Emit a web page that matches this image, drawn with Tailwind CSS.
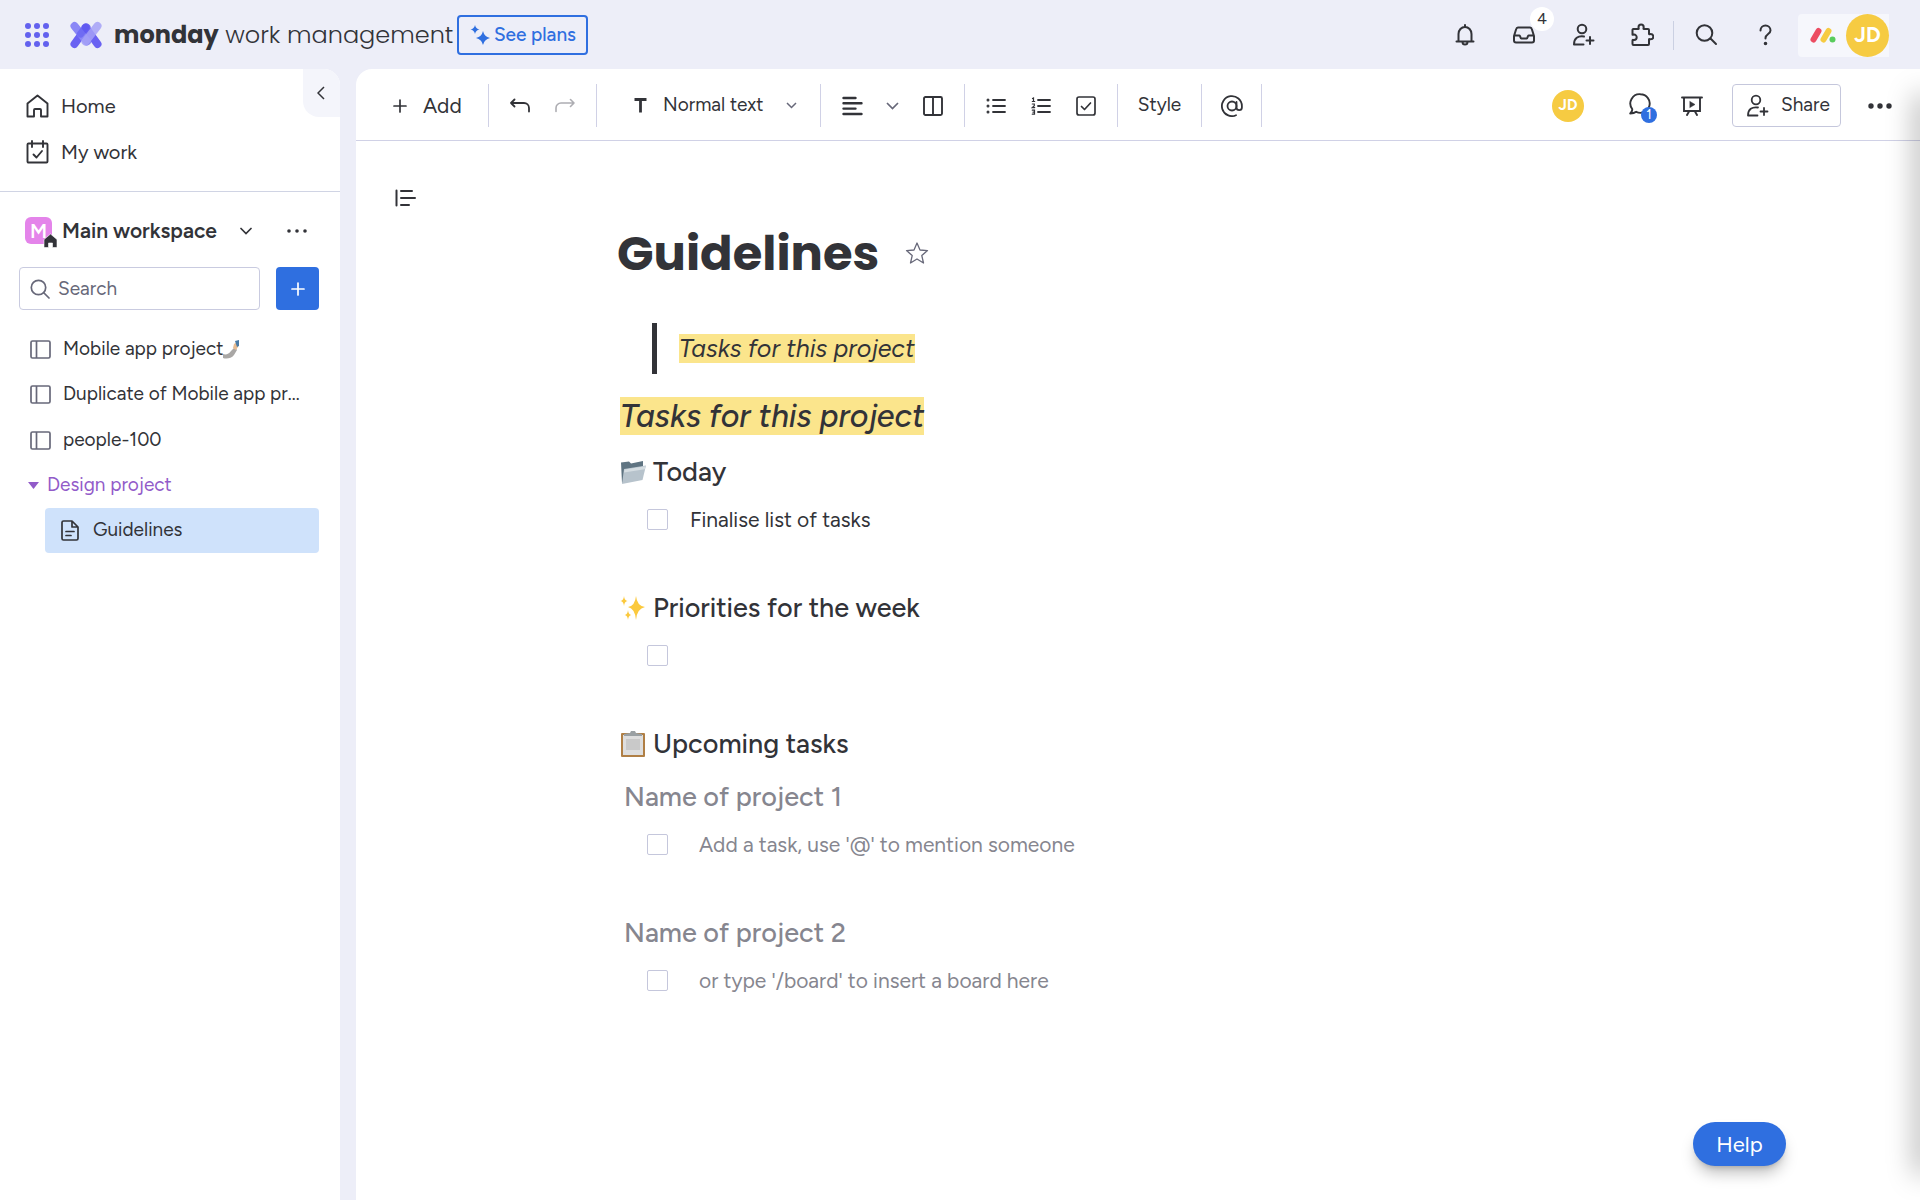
<!DOCTYPE html>
<html lang="en">
    <head>
        <meta charset="UTF-8" />
        <meta name="viewport" content="width=device-width, initial-scale=1" />
        <title>Guidelines</title>
        <script src="https://cdn.jsdelivr.net/npm/@tailwindcss/browser@4"></script>
    </head>
    <body class="flex min-h-screen flex-col bg-[#edeef8] font-['Figtree','Inter',sans-serif] text-[#323338]">
        <!-- top bar -->
        <header class="flex h-[69px] shrink-0 items-center pt-px pr-[31px] pl-6">
            <button aria-label="Apps">
                <svg class="h-[26px] w-[26px]" viewBox="0 0 26 26" fill="#6361ee">
                    <circle cx="4" cy="4" r="3" /><circle cx="13" cy="4" r="3" /><circle cx="22" cy="4" r="3" />
                    <circle cx="4" cy="13" r="3" /><circle cx="13" cy="13" r="3" /><circle cx="22" cy="13" r="3" />
                    <circle cx="4" cy="22" r="3" /><circle cx="13" cy="22" r="3" /><circle cx="22" cy="22" r="3" />
                </svg>
            </button>
            <svg class="ml-5 h-7 w-8" viewBox="0 0 32 28" fill="none" stroke-linecap="round" stroke-width="8">
                <path d="M15.500 6.500L27.500 23M16.500 6.500L4.500 23" stroke="#6a62f2" />
                <path d="M4.500 5L17 20.500" stroke="#8a87f6" />
                <path d="M27.500 5L15.500 20.500" stroke="#a5a1f7" stroke-opacity=".85" />
                <path d="M15.500 6.500L10.500 13" stroke="#5a53f0" stroke-opacity=".55" stroke-width="7" />
            </svg>
            <a href="#" class="ml-3 font-['Poppins','Figtree',sans-serif] text-[24px] leading-8 font-light whitespace-nowrap"><b class="font-bold">monday</b> work management</a>
            <button class="ml-1 flex h-10 w-[131px] shrink-0 items-center justify-center gap-1 rounded border-2 border-[#2f6fe0] text-[19px] font-medium whitespace-nowrap text-[#2f6fe0]">
                <svg class="h-5 w-5" viewBox="0 0 20 20" fill="currentColor">
                    <path d="M5 0q.8 3.700 4.500 4.500Q5.800 5.300 5 9 4.200 5.300.5 4.500 4.200 3.700 5 0zM13 6q1.200 5.600 7 7-5.800 1.400-7 7-1.200-5.600-7-7 5.800-1.400 7-7z" />
                </svg>
                See plans
            </button>
            <nav class="ml-auto flex items-center">
                <button aria-label="Notifications" class="flex w-[59px] justify-center">
                    <svg class="h-6 w-6" viewBox="0 0 24 24" fill="none" stroke="currentColor" stroke-width="2" stroke-linecap="round" stroke-linejoin="round">
                        <path d="M12 2v1.500M3.500 18.500h17M5.500 18.500V11a6.500 7 0 0 1 13 0v7.500M9.500 19a2.500 2.500 0 0 0 5 0" />
                    </svg>
                </button>
                <button aria-label="Inbox" class="relative flex w-[59px] justify-center">
                    <svg class="h-6 w-6" viewBox="0 0 24 24" fill="none" stroke="currentColor" stroke-width="2" stroke-linejoin="round">
                        <path d="M6 4.500h12a2 2 0 0 1 1.800 1.500L22 13v4.500a2 2 0 0 1-2 2H4a2 2 0 0 1-2-2V13l2.200-7A2 2 0 0 1 6 4.500zM2 12.500h5.500c.8 0 .8 3 1.800 3h5.400c1 0 1-3 1.800-3H22" />
                    </svg>
                    <span class="absolute -top-4 left-9 flex h-6 w-6 items-center justify-center rounded-full bg-white text-[16px]">4</span>
                </button>
                <button aria-label="Invite members" class="flex w-[59px] justify-center">
                    <svg class="h-6 w-6" viewBox="0 0 24 24" fill="none" stroke="currentColor" stroke-width="2" stroke-linecap="round" stroke-linejoin="round">
                        <circle cx="11" cy="6" r="4.300" /><path d="M13 13.500c-6-.8-10 1.500-10 8h9.500M19 14v7M15.500 17.500h7" />
                    </svg>
                </button>
                <button aria-label="Apps marketplace" class="flex w-[59px] justify-center">
                    <svg class="h-6 w-6" viewBox="0 0 24 24" fill="none" stroke="currentColor" stroke-width="2" stroke-linejoin="round">
                        <path d="M3 6h5.300c.8 0 .2-.9.200-1.800a2.600 2.600 0 0 1 5.200 0c0 .9-.6 1.800.2 1.800H18a1 1 0 0 1 1 1v3.800c0 .8.8.3 1.700.3a2.600 2.600 0 0 1 0 5.200c-.9 0-1.700-.6-1.700.2V21a1 1 0 0 1-1 1H3.500a1 1 0 0 1-1-1v-3.600c0-.9.700-.4 1.500-.4a2.700 2.700 0 0 0 0-5.400c-.8 0-1.500.6-1.500-.2V7a1 1 0 0 1 .5-1z" />
                    </svg>
                </button>
                <span class="mx-0.5 h-[29px] w-px bg-[#cbd0e2]"></span>
                <button aria-label="Search" class="flex w-[59px] justify-center">
                    <svg class="h-6 w-6" viewBox="0 0 24 24" fill="none" stroke="currentColor" stroke-width="2" stroke-linecap="round">
                        <circle cx="10.500" cy="10" r="7.800" /><path d="M16.500 15.500l5.500 5.500" />
                    </svg>
                </button>
                <button aria-label="Help center" class="flex w-[59px] justify-center">
                    <svg class="h-6 w-6" viewBox="0 0 24 24" fill="none" stroke="currentColor" stroke-width="2" stroke-linecap="round">
                        <path d="M7.500 7.500a5 5 0 0 1 10 0c0 3.500-5 3.500-5 7.500v.5" /><circle cx="12.500" cy="20.500" r=".8" fill="currentColor" />
                    </svg>
                </button>
                <button aria-label="Profile" class="ml-1 flex h-[43px] items-center rounded-l bg-[#f6f7fc] pl-3">
                    <svg class="h-4 w-[26px]" viewBox="0 0 26 16" fill="none" stroke-linecap="round" stroke-width="6">
                        <path d="M3.500 12.500L8.500 4" stroke="#ec4d62" /><path d="M13.500 12.500L18.500 4" stroke="#f6cb42" />
                        <circle cx="22.500" cy="12.500" r="3" fill="#59cc5c" />
                    </svg>
                    <span class="ml-2.5 flex h-[43px] w-[43px] items-center justify-center rounded-full bg-[#f6cb42] text-[21px] font-bold text-white">JD</span>
                </button>
            </nav>
        </header>

        <div class="flex flex-1 gap-4">
            <!-- sidebar -->
            <aside class="w-[340px] shrink-0 rounded-tr-2xl bg-white">
                <div class="flex h-[123px] border-b border-[#d0d4e4]">
                    <nav class="flex flex-1 flex-col pt-3.5 pl-[26px] text-[20px]">
                        <a href="#" class="flex h-[46px] items-center gap-3">
                            <svg class="h-6 w-[23px]" viewBox="0 0 23 24" fill="none" stroke="currentColor" stroke-width="1.900" stroke-linejoin="round">
                                <path d="M1.500 9.500L11.500 1.500l10 8V22.500h-6.500v-6.500a1 1 0 0 0-1-1h-5a1 1 0 0 0-1 1v6.500H1.500z" />
                            </svg>
                            Home
                        </a>
                        <a href="#" class="flex h-[46px] items-center gap-3">
                            <svg class="h-6 w-[23px]" viewBox="0 0 23 24" fill="none" stroke="currentColor" stroke-width="1.900" stroke-linecap="round" stroke-linejoin="round">
                                <rect x="1.500" y="3.500" width="20" height="19" rx="1" /><path d="M6 1v6M17 1v6M7.500 14.500l3 3 5.500-6.500" />
                            </svg>
                            My work
                        </a>
                    </nav>
                    <button aria-label="Collapse sidebar" class="flex h-12 w-[37px] items-center justify-center rounded-tr-2xl rounded-bl-2xl bg-[#f4f5fb]">
                        <svg class="mr-0.5 h-3.5 w-2" viewBox="0 0 8 14" fill="none" stroke="currentColor" stroke-width="1.500"><path d="M7 1L1 7l6 6" /></svg>
                    </button>
                </div>

                <div class="flex h-[75px] items-center pt-0.5 pr-[31px] pl-[25px]">
                    <div class="relative flex h-[27px] w-[27px] items-center justify-center rounded-md bg-[#e484ea] text-[20px] font-semibold text-white">
                        M
                        <svg class="absolute -right-1.5 -bottom-1 h-[15px] w-[15px]" viewBox="0 0 15 15">
                            <path d="M1 6.500L7.500 1 14 6.500V14.500H9.500V10h-4v4.500H1z" fill="#323338" stroke="#fff" stroke-width=".6" />
                        </svg>
                    </div>
                    <h2 class="ml-2.5 w-[174px] text-[21px] font-semibold whitespace-nowrap">Main workspace</h2>
                    <button aria-label="Switch workspace" class="p-1">
                        <svg class="h-2 w-3" viewBox="0 0 12 8" fill="none" stroke="currentColor" stroke-width="1.700" stroke-linecap="round"><path d="M1 1.500l5 5 5-5" /></svg>
                    </button>
                    <button aria-label="Workspace options" class="ml-auto">
                        <svg class="mr-0.5 h-5 w-5" viewBox="0 0 20 20" fill="currentColor"><circle cx="2" cy="10" r="1.800" /><circle cx="10" cy="10" r="1.800" /><circle cx="18" cy="10" r="1.800" /></svg>
                    </button>
                </div>

                <div class="flex gap-4 pr-[21px] pl-[19px]">
                    <label class="flex h-[43px] flex-1 items-center gap-2 rounded border border-[#c9cbe0] pl-2.5 text-[#676879]">
                        <svg class="h-5 w-5 shrink-0" viewBox="0 0 20 20" fill="none" stroke="currentColor" stroke-width="1.700" stroke-linecap="round"><circle cx="8.500" cy="8.500" r="7.200" /><path d="M14 14l5 5" /></svg>
                        <input type="search" aria-label="Search" placeholder="Search" class="w-full min-w-0 bg-transparent pt-px text-[19px] outline-none placeholder:text-[#676879]" />
                    </label>
                    <button aria-label="Add item" class="flex h-[43px] w-[43px] items-center justify-center rounded bg-[#2f6fe0] text-white">
                        <svg class="h-3.5 w-3.5" viewBox="0 0 14 14" stroke="currentColor" stroke-width="1.700" stroke-linecap="round"><path d="M7 1v12M1 7h12" /></svg>
                    </button>
                </div>

                <ul class="mt-[17px] pr-[21px] pl-[30px] text-[19px]">
                    <li>
                        <a href="#" class="flex h-[45px] items-center gap-3">
                            <svg class="h-[19px] w-[21px] shrink-0" viewBox="0 0 21 19" fill="none" stroke="#676879" stroke-width="1.700"><rect x="1" y="1" width="19" height="17" rx="1.500" /><path d="M6.500 1v17" /></svg>
                            <span class="flex items-center whitespace-nowrap">Mobile app project
                                <svg class="h-[19px] w-[17px]" viewBox="0 0 17 19">
                                    <path d="M0 14c3 1 6 0 8-3l4-4 2 3-3 5c-3 4-8 4-11 3z" fill="#a9a7a5" />
                                    <path d="M10 8l1-4 3-2 1 5-2 3z" fill="#e9bd92" />
                                    <path d="M12 1l4-1v6l-2 1z" fill="#4a7ba6" />
                                </svg>
                            </span>
                        </a>
                    </li>
                    <li>
                        <a href="#" class="flex h-[45px] items-center gap-3">
                            <svg class="h-[19px] w-[21px] shrink-0" viewBox="0 0 21 19" fill="none" stroke="#676879" stroke-width="1.700"><rect x="1" y="1" width="19" height="17" rx="1.500" /><path d="M6.500 1v17" /></svg>
                            <span class="whitespace-nowrap">Duplicate of Mobile app pr...</span>
                        </a>
                    </li>
                    <li>
                        <a href="#" class="flex h-[46px] items-center gap-3">
                            <svg class="h-[19px] w-[21px] shrink-0" viewBox="0 0 21 19" fill="none" stroke="#676879" stroke-width="1.700"><rect x="1" y="1" width="19" height="17" rx="1.500" /><path d="M6.500 1v17" /></svg>
                            people-100
                        </a>
                    </li>
                    <li>
                        <button class="-ml-0.5 flex h-[45px] items-center gap-2 text-[#925bc9]">
                            <svg class="h-[7px] w-[11px]" viewBox="0 0 11 7" fill="currentColor"><path d="M0 0h11L5.500 7z" /></svg>
                            Design project
                        </button>
                        <a href="#" class="ml-[15px] flex h-[45px] items-center gap-3.5 rounded bg-[#cfe2fb] pl-4">
                            <svg class="h-[21px] w-[18px]" viewBox="0 0 18 21" fill="none" stroke="currentColor" stroke-width="1.700" stroke-linecap="round" stroke-linejoin="round">
                                <path d="M2.500 1H11l6 6v11.500A1.500 1.500 0 0 1 15.500 20h-13A1.500 1.500 0 0 1 1 18.500v-16A1.500 1.500 0 0 1 2.500 1zM11 1v6h6M5 11.500h8M5 15.500h5" />
                            </svg>
                            Guidelines
                        </a>
                    </li>
                </ul>
            </aside>

            <main class="relative min-w-0 flex-1 overflow-hidden rounded-tl-2xl bg-white">
                <!-- toolbar -->
                <div class="flex h-[72px] items-center border-b border-[#d0d1e6] pt-0.5 pr-6 text-[19px]">
                    <button class="flex h-[43px] w-[133px] items-center gap-4 border-r border-[#d0d1e6] pl-[37px] text-[21px]">
                        <svg class="h-3.5 w-3.5" viewBox="0 0 14 14" stroke="currentColor" stroke-width="1.700" stroke-linecap="round"><path d="M7 1v12M1 7h12" /></svg>
                        Add
                    </button>
                    <div class="flex h-[43px] w-[108px] items-center justify-center gap-[25px] border-r border-[#d0d1e6]">
                        <button aria-label="Undo">
                            <svg class="h-4 w-5" viewBox="0 0 20 16" fill="none" stroke="currentColor" stroke-width="1.800" stroke-linecap="round" stroke-linejoin="round"><path d="M4.500 1.500L1 5l3.500 3.500M1 5h13a5 5 0 0 1 5 5V13.500" /></svg>
                        </button>
                        <button aria-label="Redo" class="text-[#adadb2]">
                            <svg class="h-4 w-5" viewBox="0 0 20 16" fill="none" stroke="currentColor" stroke-width="1.600" stroke-linecap="round" stroke-linejoin="round"><path d="M15.500 1.500L19 5l-3.500 3.500M19 5H6a5 5 0 0 0-5 5V13.500" /></svg>
                        </button>
                    </div>
                    <label class="relative flex h-[43px] w-[224px] items-center border-r border-[#d0d1e6] pl-[37px]">
                        <svg class="h-[15px] w-[13px]" viewBox="0 0 13 15" fill="none" stroke="currentColor" stroke-width="2.800"><path d="M.500 1.500h12M6.500 1.500v13" /></svg>
                        <select aria-label="Text style" class="ml-4 w-[142px] appearance-none bg-transparent outline-none"><option>Normal text</option></select>
                        <svg class="pointer-events-none absolute right-[23px] h-[7px] w-[11px]" viewBox="0 0 11 7" fill="none" stroke="#676879" stroke-width="1.500"><path d="M1 1l4.500 4.500L10 1" /></svg>
                    </label>
                    <div class="flex h-[43px] w-36 items-center border-r border-[#d0d1e6] pl-[21px]">
                        <button aria-label="Align">
                            <svg class="h-5 w-[21px]" viewBox="0 0 21 20" stroke="currentColor" stroke-width="2.400" stroke-linecap="round"><path d="M1.500 2h12M1.500 7.300h18M1.500 12.600h12M1.500 18h18" /></svg>
                        </button>
                        <button aria-label="Align options" class="ml-[23px]">
                            <svg class="h-2 w-[13px]" viewBox="0 0 13 8" fill="none" stroke="#676879" stroke-width="1.700"><path d="M1 1l5.500 5.500L12 1" /></svg>
                        </button>
                        <button aria-label="Columns" class="ml-6">
                            <svg class="h-5 w-5" viewBox="0 0 20 20" fill="none" stroke="currentColor" stroke-width="1.900"><rect x="1" y="1" width="18" height="18" rx="1.500" /><path d="M10 1v18" /></svg>
                        </button>
                    </div>
                    <div class="flex h-[43px] w-[153px] items-center justify-center gap-[25px] border-r border-[#d0d1e6]">
                        <button aria-label="Bulleted list">
                            <svg class="h-5 w-5" viewBox="0 0 20 20" fill="currentColor" stroke="currentColor" stroke-width="1.800" stroke-linecap="round"><path d="M7 4h12M7 10h12M7 16h12" /><circle cx="2" cy="4" r=".6" /><circle cx="2" cy="10" r=".6" /><circle cx="2" cy="16" r=".6" /></svg>
                        </button>
                        <button aria-label="Numbered list">
                            <svg class="h-5 w-5" viewBox="0 0 20 20" fill="none" stroke="currentColor" stroke-width="1.800" stroke-linecap="round"><path d="M7 4h12M7 10h12M7 16h12" /><path stroke-width="1.200" d="M1.500 2.500L2.500 2v3.500M1.300 5.500h2.400M1.300 8h2v1.800l-2 1.800h2.400M1.300 14.200h2.200v4H1.300M2 16.200h1.500" /></svg>
                        </button>
                        <button aria-label="Checklist">
                            <svg class="h-5 w-5" viewBox="0 0 20 20" fill="none" stroke="currentColor" stroke-width="1.700" stroke-linecap="round" stroke-linejoin="round"><rect x="1" y="1" width="18" height="18" rx="2" /><path d="M5.500 10.500l3 3L14.500 7" /></svg>
                        </button>
                    </div>
                    <button class="h-[43px] w-[84px] border-r border-[#d0d1e6]">Style</button>
                    <button aria-label="Mention" class="flex h-[43px] w-[60px] items-center justify-center border-r border-[#d0d1e6]">
                        <svg class="h-[22px] w-[22px]" viewBox="0 0 22 22" fill="none" stroke="currentColor" stroke-width="1.800" stroke-linecap="round"><circle cx="11" cy="11" r="4.500" /><path d="M15.500 7v5.500a2.700 2.700 0 0 0 5.400 0V11A10 10 0 1 0 15 20.200" /></svg>
                    </button>

                    <div class="ml-auto flex items-center">
                        <span class="flex h-8 w-8 items-center justify-center rounded-full bg-[#f6cb42] text-[15px] font-bold text-white">JD</span>
                        <button aria-label="Comments" class="relative ml-[45px]">
                            <svg class="mb-1 h-[22px] w-[22px]" viewBox="0 0 22 22" fill="none" stroke="currentColor" stroke-width="1.900" stroke-linejoin="round"><path d="M11.500 1.200a9.300 9.300 0 1 1-4.300 17.600c-1.500 1.200-3.500 1.700-6 1.700 1.800-1.700 2.300-2.800 2-4.500A9.300 9.300 0 0 1 11.500 1.200z" /></svg>
                            <span class="absolute top-3.5 left-3 flex h-4 w-4 items-center justify-center rounded-full bg-[#2f6fe0] text-[13px] leading-4 text-white">1</span>
                        </button>
                        <button aria-label="Present" class="ml-[30px]">
                            <svg class="h-5 w-[22px]" viewBox="0 0 22 20" fill="none" stroke="currentColor" stroke-width="1.900" stroke-linecap="round"><path d="M1 1.500h20M3 1.500V15h16V1.500M8 15.500L6 19M14 15.500l2 3.500" /><path d="M9 5.500l5 3-5 3z" fill="currentColor" stroke-width=".5" /></svg>
                        </button>
                        <button class="ml-[29px] flex h-[43px] w-[109px] items-center gap-3 rounded border border-[#c5c7dc] pl-3">
                            <svg class="h-6 w-6 shrink-0" viewBox="0 0 24 24" fill="none" stroke="currentColor" stroke-width="1.800" stroke-linecap="round" stroke-linejoin="round">
                                <circle cx="11" cy="6" r="4.300" /><path d="M13 13.500c-6-.8-10 1.500-10 8h9.500M19 14v7M15.500 17.500h7" />
                            </svg>
                            Share
                        </button>
                        <button aria-label="More" class="ml-[27px] mr-1">
                            <svg class="h-6 w-6" viewBox="0 0 24 24" fill="currentColor"><circle cx="3" cy="12" r="2.700" /><circle cx="12" cy="12" r="2.700" /><circle cx="21" cy="12" r="2.700" /></svg>
                        </button>
                    </div>
                </div>

                <!-- document -->
                <div class="flex">
                    <div class="w-[264px] shrink-0 pt-12 pl-[39px]">
                        <button aria-label="Table of contents">
                            <svg class="h-[18px] w-[21px]" viewBox="0 0 21 18" stroke="currentColor" stroke-width="2" stroke-linecap="round"><path d="M1.500 1.500v15M6 2h11M6 9h14M6 16h8" /></svg>
                        </button>
                    </div>
                    <article class="min-w-0 flex-1 pt-[81px]">
                        <div class="-ml-[3px] flex h-16 items-center gap-[26px]">
                            <h1 class="font-['Poppins','Figtree',sans-serif] text-[48px] font-bold">Guidelines</h1>
                            <button aria-label="Add to favorites">
                                <svg class="h-6 w-6" viewBox="0 0 24 24" fill="none" stroke="#676879" stroke-width="1.300" stroke-linejoin="round"><path d="M12 1l3 7 7.500.6-5.700 5 1.700 7.400-6.500-4-6.500 4 1.700-7.400-5.700-5L9 8z" /></svg>
                            </button>
                        </div>
                        <blockquote class="mt-[37px] ml-8 flex h-[51px] items-center border-l-[5px] border-[#323338] pl-[22px] text-[25px] italic">
                            <mark class="bg-[#fbe58c] leading-[29px] text-inherit">Tasks for this project</mark>
                        </blockquote>
                        <h2 class="mt-[23px] text-[32px] leading-[38px] font-medium italic"><mark class="bg-[#fbe58c] text-inherit">Tasks for this project</mark></h2>

                        <h3 class="mt-[15px] flex h-11 items-center gap-[7px] text-[27px] font-medium">
                            <svg class="h-[26px] w-[26px]" viewBox="0 0 26 26">
                                <path d="M1 3.500l8-1 2 2 12-2.500v8L2 24z" fill="#5f7482" />
                                <path d="M4 10l22-3.500L22.500 21 2 25z" fill="#b7c3cc" /><path d="M4.500 10.500l21-3.300-.7 3L4 13.500z" fill="#d5dde2" />
                            </svg>
                            Today
                        </h3>
                        <div class="flex h-[51px] items-center gap-[22px] pl-[27px] text-[21px]">
                            <input id="task-1" type="checkbox" class="h-[21px] w-[21px] appearance-none rounded-xs border border-[#c5c7dc]" />
                            <label for="task-1">Finalise list of tasks</label>
                        </div>

                        <h3 class="mt-[41px] flex h-11 items-center gap-[7px] text-[27px] font-medium">
                            <svg class="h-[26px] w-[26px]" viewBox="0 0 26 26" fill="#fbc93d">
                                <path d="M16 1q1 10 9 11-8 1.500-9 13-1-11.500-8-13 7-1 8-11z" /><path d="M4 1q.4 4.500 3.500 5-3.100.5-3.500 5-.4-4.500-3.500-5 3.100-.5 3.500-5zM8 15q.4 4.500 3.300 5-2.900.5-3.300 5-.4-4.500-3.300-5 2.900-.5 3.300-5z" />
                            </svg>
                            Priorities for the week
                        </h3>
                        <div class="flex h-[51px] items-center pl-[27px]">
                            <input type="checkbox" aria-label="Empty task" class="h-[21px] w-[21px] appearance-none rounded-xs border border-[#c5c7dc]" />
                        </div>

                        <h3 class="mt-[41px] flex h-11 items-center gap-[7px] text-[27px] font-medium">
                            <svg class="h-[26px] w-[26px]" viewBox="0 0 26 26">
                                <rect x="1" y="2" width="24" height="24" rx="1" fill="#b07f45" /><rect x="3" y="4" width="20" height="20" fill="#dedede" />
                                <rect x="6" y="8" width="14" height="11" fill="#c9c9c9" /><path d="M4 5V3l6-1 1-2h4l1 2 6 1v2z" fill="#9aa0a3" />
                            </svg>
                            Upcoming tasks
                        </h3>
                        <h3 class="mt-[9px] flex h-11 items-center pl-1 text-[27px] font-medium text-[#86868f]">Name of project 1</h3>
                        <div class="flex h-[51px] items-center gap-[31px] pl-[27px] text-[21px] text-[#86868f]">
                            <input id="task-2" type="checkbox" class="h-[21px] w-[21px] appearance-none rounded-xs border border-[#c5c7dc]" />
                            <label for="task-2">Add a task, use '@' to mention someone</label>
                        </div>
                        <h3 class="mt-[41px] flex h-11 items-center pl-1 text-[27px] font-medium text-[#86868f]">Name of project 2</h3>
                        <div class="flex h-[51px] items-center gap-[31px] pl-[27px] text-[21px] text-[#86868f]">
                            <input id="task-3" type="checkbox" class="h-[21px] w-[21px] appearance-none rounded-xs border border-[#c5c7dc]" />
                            <label for="task-3">or type '/board' to insert a board here</label>
                        </div>
                    </article>
                </div>

                <!-- edge shadow of the closed side panel -->
                <div class="pointer-events-none absolute -right-2 top-7 bottom-7 w-2 rounded-full shadow-[0_0_28px_4px_rgba(0,0,0,0.35)]"></div>
                <button class="absolute right-[134px] bottom-[34px] h-11 w-[93px] rounded-full bg-[#2f6fe0] text-[22px] text-white shadow-lg shadow-black/25">Help</button>
            </main>
        </div>
    </body>
</html>
